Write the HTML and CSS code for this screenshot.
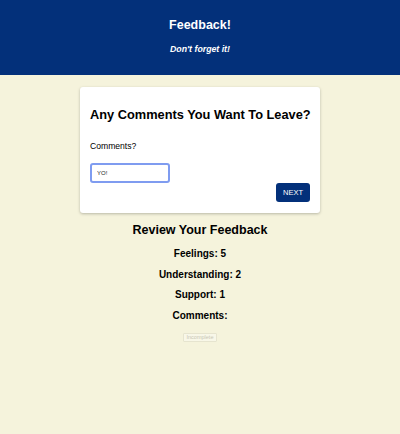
FILE: index.html
```html
<!DOCTYPE html>
<html>
<head>
<meta charset="utf-8">
<link rel="stylesheet" href="styles.css">
</head>
<body>
<header class="app-header">
  <h1 class="app-title">Feedback!</h1>
  <h4 class="app-subtitle">Don't forget it!</h4>
</header>
<main class="content">
  <section class="card">
    <h2 class="card-title">Any Comments You Want To Leave?</h2>
    <label class="field-label" for="comments">Comments?</label>
    <div class="card-row">
      <input id="comments" class="text-input" type="text" value="YO!">
      <button class="next-btn">NEXT</button>
    </div>
  </section>
  <section class="review">
    <h2 class="review-title">Review Your Feedback</h2>
    <h3 class="review-item">Feelings: 5</h3>
    <h3 class="review-item">Understanding: 2</h3>
    <h3 class="review-item">Support: 1</h3>
    <h3 class="review-item">Comments: </h3>
    <button class="incomplete-btn" disabled>Incomplete</button>
  </section>
</main>
</body>
</html>
```
FILE: styles.css
```css
html, body {
  margin: 0;
  padding: 0;
}
body {
  background: #f5f3dc;
  font-family: "Liberation Sans", Arial, sans-serif;
  color: #000;
  width: 400px;
  height: 434px;
  overflow: hidden;
}
.app-header {
  background: #03307a;
  color: #fff;
  height: 75px;
  box-sizing: border-box;
  padding-top: 18px;
  text-align: center;
}
.app-title {
  margin: 0;
  font-size: 12.5px;
  line-height: 15px;
  font-weight: bold;
}
.app-subtitle {
  margin: 11px 0 0;
  font-size: 8.75px;
  line-height: 11px;
  font-style: italic;
  font-weight: bold;
}
.content {
  display: flex;
  flex-direction: column;
  align-items: center;
  padding-top: 12px;
}
.card {
  width: 240px;
  box-sizing: border-box;
  background: #fff;
  border-radius: 3px;
  box-shadow: 0 1px 3px rgba(0,0,0,0.25);
  padding: 20px 10px 11px;
}
.card-title {
  margin: 0;
  font-size: 12.8px;
  line-height: 15px;
  font-weight: bold;
  text-align: center;
  white-space: nowrap;
}
.field-label {
  display: block;
  margin-top: 19px;
  font-size: 8.6px;
  line-height: 10px;
}
.card-row {
  display: flex;
  justify-content: space-between;
  align-items: flex-start;
  margin-top: 12px;
}
.text-input {
  width: 80px;
  height: 20px;
  box-sizing: border-box;
  border: 2px solid #7f9cf0;
  border-radius: 3px;
  padding: 0 5px;
  font-family: "Liberation Sans", Arial, sans-serif;
  font-size: 6px;
  color: #222;
  outline: none;
  background: #fff;
}
.next-btn {
  margin-top: 20px;
  width: 34px;
  height: 19px;
  border: none;
  border-radius: 3px;
  background: #03307a;
  color: #fff;
  font-family: "Liberation Sans", Arial, sans-serif;
  font-size: 7.5px;
  padding: 0;
}
.review {
  display: flex;
  flex-direction: column;
  align-items: center;
  padding-top: 10px;
}
.review-title {
  margin: 0;
  font-size: 12.5px;
  line-height: 15px;
  font-weight: bold;
}
.review-item {
  margin: 10px 0 0;
  font-size: 10px;
  line-height: 12px;
  font-weight: bold;
}
.review-item + .review-item {
  margin-top: 8.5px;
}
.incomplete-btn {
  margin-top: 11px;
  height: 9px;
  padding: 0 3px;
  border: 1px solid #e6e4cf;
  background: #f8f7e8;
  color: #c8c6b4;
  font-family: "Liberation Sans", Arial, sans-serif;
  font-size: 5.5px;
  line-height: 7px;
  border-radius: 1px;
}
```
